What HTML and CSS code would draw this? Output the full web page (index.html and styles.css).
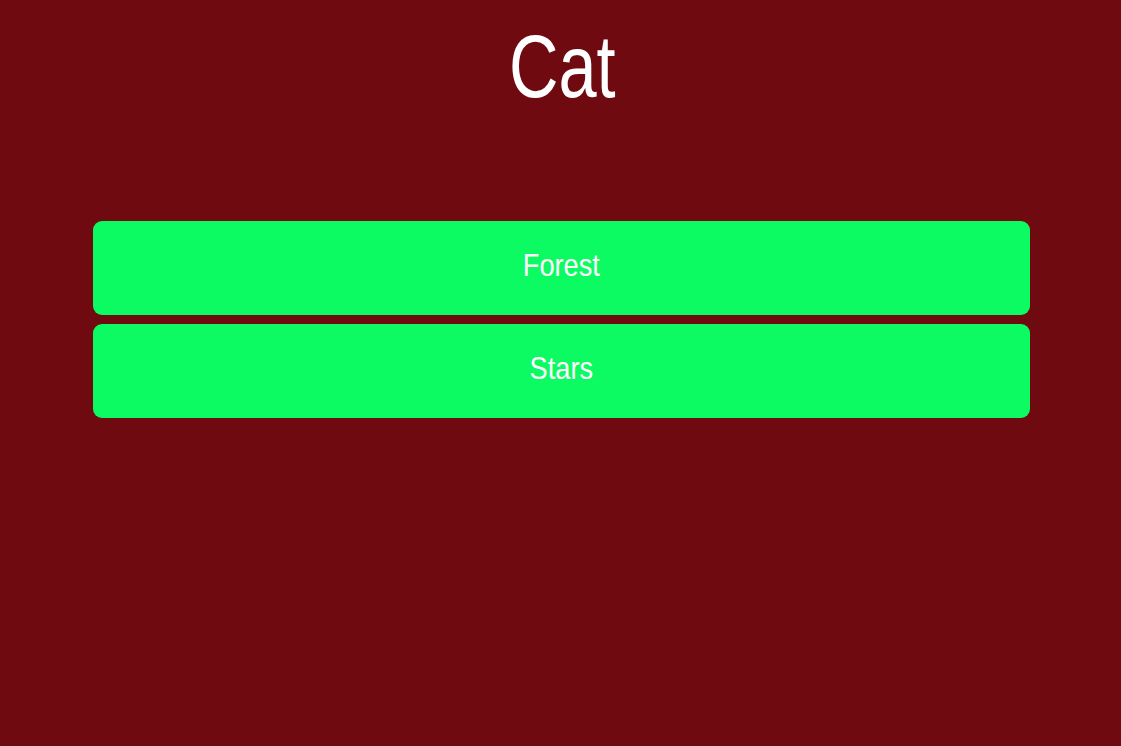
FILE: index.html
```html
<!DOCTYPE html>
<html>
<head>
<meta charset="utf-8">
<link rel="stylesheet" href="styles.css">
</head>
<body>
<main class="page">
  <h1 class="title"><span class="narrow">Cat</span></h1>
  <div class="options">
    <button class="option"><span class="narrow">Forest</span></button>
    <button class="option"><span class="narrow">Stars</span></button>
  </div>
</main>
</body>
</html>
```
FILE: styles.css
```css
html, body {
  margin: 0;
  padding: 0;
  height: 100%;
  background: #6f0b10;
}
.page {
  display: flex;
  flex-direction: column;
  align-items: center;
  font-family: "Liberation Sans", Arial, sans-serif;
  color: #ffffff;
}
.narrow {
  display: inline-block;
  transform: scaleX(0.77);
}
.title {
  margin: 15px 0 0;
  font-size: 89px;
  font-weight: normal;
  line-height: 102px;
  padding-left: 3px;
}
.options {
  margin-top: 104px;
  width: 937px;
  display: flex;
  flex-direction: column;
  gap: 9px;
  padding-left: 2px;
}
.option {
  height: 94px;
  border: none;
  border-radius: 9px;
  background: #0cfb63;
  color: #ffffff;
  font-family: inherit;
  font-size: 32px;
  padding: 0 0 5px;
}
.option .narrow {
  transform: scaleX(0.85);
}
```
